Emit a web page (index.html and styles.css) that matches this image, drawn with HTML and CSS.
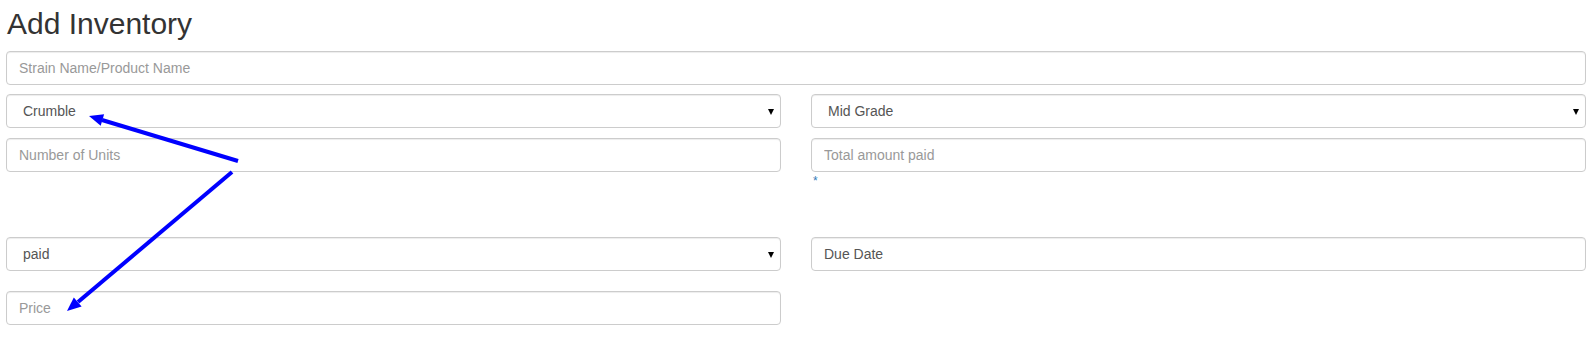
FILE: index.html
```html
<!DOCTYPE html>
<html lang="en">
<head>
    <meta charset="UTF-8">
    <title>Add Inventory</title>
    <link rel="stylesheet" href="styles.css">
</head>
<body>
    <div class="page">
        <h2 class="title">Add Inventory</h2>

        <form class="inventory-form">
            <input type="text" class="form-control full" placeholder="Strain Name/Product Name">

            <div class="form-grid">
                <div class="select-wrap">
                    <select class="form-control">
                        <option>Crumble</option>
                        <option>Flower</option>
                        <option>Shatter</option>
                    </select>
                </div>
                <div class="select-wrap">
                    <select class="form-control">
                        <option>Mid Grade</option>
                        <option>Top Shelf</option>
                        <option>Low Grade</option>
                    </select>
                </div>

                <input type="text" class="form-control" placeholder="Number of Units">
                <div>
                    <input type="text" class="form-control" placeholder="Total amount paid">
                    <div class="help-text">*</div>
                </div>
            </div>

            <div class="form-grid lower">
                <div class="select-wrap">
                    <select class="form-control">
                        <option>paid</option>
                        <option>fronted</option>
                    </select>
                </div>
                <input type="text" class="form-control filled" value="Due Date">

                <input type="text" class="form-control price" placeholder="Price">
            </div>
        </form>
    </div>

    <!-- annotation arrows drawn over the form -->
    <svg class="annotations" width="1594" height="354" viewBox="0 0 1594 354">
        <line x1="238" y1="161" x2="102" y2="120" stroke="#0000ff" stroke-width="4"/>
        <polygon points="89,116 104.1,114.3 100.7,125.8" fill="#0000ff"/>
        <line x1="232" y1="172" x2="78" y2="302" stroke="#0000ff" stroke-width="4"/>
        <polygon points="67,311 81.6,306.6 73.8,297.4" fill="#0000ff"/>
    </svg>
</body>
</html>
```

FILE: styles.css
```css
/* Base */
* {
    box-sizing: border-box;
}

body {
    margin: 0;
    background: #fff;
    color: #333;
    font-family: 'Liberation Sans', Arial, sans-serif;
    font-size: 14px;
}

.page {
    padding: 7px 8px 0 6px;
}

.title {
    margin: 0 0 11px 1px;
    font-size: 30px;
    font-weight: 400;
    line-height: 33px;
    color: #333;
}

/* Form controls */
.form-control {
    display: block;
    width: 100%;
    height: 34px;
    padding: 6px 12px;
    border: 1px solid #ccc;
    border-radius: 4px;
    background: #fff;
    color: #555;
    font-family: inherit;
    font-size: 14px;
    line-height: 20px;
    box-shadow: inset 0 1px 1px rgba(0, 0, 0, 0.075);
    outline: none;
}

.form-control::placeholder {
    color: #999;
}

.full {
    margin-bottom: 9px;
}

.form-grid {
    display: grid;
    grid-template-columns: 1fr 1fr;
    column-gap: 30px;
    row-gap: 10px;
    align-items: start;
}

.form-grid.lower {
    margin-top: 47px;
    row-gap: 20px;
}

/* Select with a small black triangle */
.select-wrap {
    position: relative;
}

.select-wrap select {
    appearance: none;
    -webkit-appearance: none;
    padding-left: 16px;
}

.select-wrap::after {
    content: "";
    position: absolute;
    right: 7px;
    top: 15px;
    border-left: 3px solid transparent;
    border-right: 3px solid transparent;
    border-top: 6px solid #000;
    pointer-events: none;
}

.help-text {
    margin-top: 1px;
    padding-left: 2px;
    font-size: 12px;
    line-height: 17px;
    color: #337ab7;
}

/* Overlay */
.annotations {
    position: absolute;
    left: 0;
    top: 0;
    pointer-events: none;
}
```
